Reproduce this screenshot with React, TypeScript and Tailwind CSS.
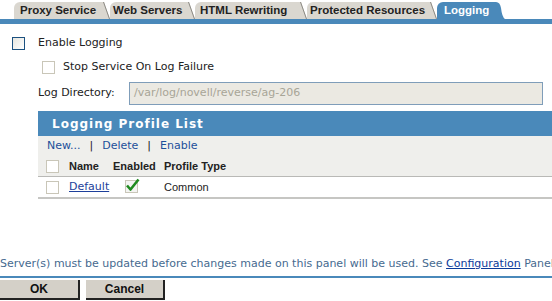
import React from 'react';

const tabs = [
  { label: 'Proxy Service', w: 'w-[89px] pl-[6px]' },
  { label: 'Web Servers', w: 'w-[78px] pl-[3px]' },
  { label: 'HTML Rewriting', w: 'w-[105px] pl-[5px]' },
  { label: 'Protected Resources', w: 'w-[123px] pl-[3px]' },
];

const Slash = () => (
  <svg width="7" height="17" viewBox="0 0 7 17" className="block shrink-0">
    <polygon points="0,0 1,0 7,17 0,17" fill="#dad7d0" />
    <line x1="0.5" y1="0" x2="6.5" y2="17" stroke="#8c8a84" strokeWidth="1" />
  </svg>
);

const Box = ({ blue = false }: { blue?: boolean }) => (
  <span
    className={`block w-[13px] h-[13px] shrink-0 border ${
      blue ? 'border-[#1c5180] bg-gradient-to-br from-[#e6e6e0] to-white' : 'border-[#c9c6b8] bg-white'
    }`}
  />
);

const Check = () => (
  <svg width="16" height="15" viewBox="0 0 16 15" className="block">
    <rect x="0.5" y="2.5" width="12" height="12" fill="#f4f4f2" stroke="#c9c6b8" />
    <path d="M2 7.5 L5.5 11.5 L13.5 1.5" fill="none" stroke="#1f8a1f" strokeWidth="2.6" strokeLinejoin="round" />
  </svg>
);

export default function App() {
  return (
    <div className="w-[552px] h-[301px] overflow-hidden bg-white font-['DejaVu_Sans',sans-serif] text-[11px] text-[#222] whitespace-nowrap">
      {/* tab strip */}
      <div className="flex items-end h-[19px] pl-[14px] font-['Liberation_Sans',Arial,sans-serif] font-bold text-[11.5px]">
        {tabs.map((t) => (
          <div key={t.label} className="flex items-end h-[17px]">
            <span className={`flex items-center h-[17px] bg-[#dad7d0] rounded-tl-[6px] text-[#222] ${t.w}`}>
              {t.label}
            </span>
            <Slash />
          </div>
        ))}
        <div className="flex items-end h-[17px]">
          <span className="flex items-center h-[17px] bg-[#4a89ba] rounded-tl-[6px] pl-[7px] pr-[7px] text-white">Logging</span>
          <svg width="9" height="17" viewBox="0 0 9 17" className="block">
            <path d="M0 0 Q4 0 5 6 Q6 15 9 17 L0 17 Z" fill="#4a89ba" />
          </svg>
        </div>
      </div>
      <div className="h-[5px] bg-[#4a89ba]" />

      {/* options */}
      <div className="flex items-center gap-[13px] pl-[12px] mt-[13px] h-[13px]">
        <Box blue />
        <span>Enable Logging</span>
      </div>
      <div className="flex items-center gap-[8px] pl-[42px] mt-[11px] h-[13px]">
        <Box />
        <span>Stop Service On Log Failure</span>
      </div>
      <div className="flex items-center pl-[38px] mt-[8px]">
        <span className="w-[91px]">Log Directory:</span>
        <div className="w-[414px] h-[23px] flex items-center pl-[4px] bg-[#ebe9e2] border border-[#7f9db9] text-[#a8a597]">
          /var/log/novell/reverse/ag-206
        </div>
      </div>

      {/* profile list */}
      <div className="ml-[38px] mt-[6px]">
        <div className="h-[25px] flex items-center pl-[14px] bg-[#4a89ba] text-white font-bold text-[12px] tracking-[1px]">
          Logging Profile List
        </div>
        <div className="bg-[#efefec] border-b border-[#b9b9b6]">
          <div className="flex items-center h-[20px] pl-[9px] text-[#1d4f9a]">
            <span>New...</span>
            <span className="mx-[9px] text-[#222]">|</span>
            <span>Delete</span>
            <span className="mx-[9px] text-[#222]">|</span>
            <span>Enable</span>
          </div>
          <div className="flex items-center h-[20px] pl-[8px] font-['Liberation_Sans',Arial,sans-serif] font-bold text-[11px]">
            <span className="w-[23px]"><Box /></span>
            <span className="w-[44px]">Name</span>
            <span className="w-[51px]">Enabled</span>
            <span>Profile Type</span>
          </div>
        </div>
        <div className="flex items-center h-[22px] pl-[8px] border-b-2 border-[#c6c6c3]">
          <span className="w-[23px]"><Box /></span>
          <span className="w-[44px] text-[#1d3f9a] underline">Default</span>
          <span className="w-[51px] pl-[12px] -mt-[4px]"><Check /></span>
          <span className="font-['Liberation_Sans',Arial,sans-serif] text-[11px]">Common</span>
        </div>
      </div>

      {/* footer */}
      <div className="mt-[57px] h-[16px] flex items-center text-[#466a8f] text-[11px]">
        Server(s) must be updated before changes made on this panel will be used. See&nbsp;
        <span className="text-[#0b3a99] underline">Configuration</span>&nbsp;Panel.
      </div>
      <div className="mt-[4px] h-[2px] bg-[#4a89ba]" />
      <div className="flex gap-[6px] mt-[2px] font-['Liberation_Sans',Arial,sans-serif] font-bold text-[12px]">
        <button className="w-[80px] h-[20px] bg-[#d4d0c8] border-r-2 border-b-2 border-[#222] text-[#111]">OK</button>
        <button className="w-[79px] h-[20px] bg-[#d4d0c8] border-r-2 border-b-2 border-[#222] text-[#111]">Cancel</button>
      </div>
    </div>
  );
}
